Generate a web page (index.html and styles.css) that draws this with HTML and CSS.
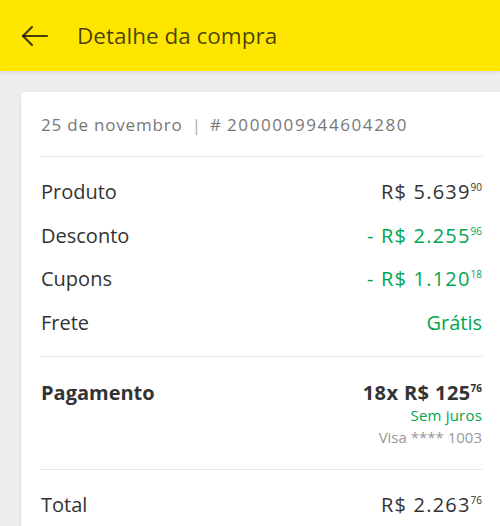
FILE: index.html
```html
<!DOCTYPE html>
<html lang="pt-BR">
<head>
    <meta charset="UTF-8">
    <meta name="viewport" content="width=device-width, initial-scale=1.0">
    <title>Detalhe da compra</title>
    <link rel="stylesheet" href="styles.css">
</head>
<body>

<header class="topbar">
    <svg class="back-icon" width="28" height="22" viewBox="0 0 28 22" fill="none" stroke="currentColor" stroke-width="2.2" stroke-linecap="round" stroke-linejoin="round">
        <path d="M26 11H2"/>
        <path d="M11 2L2 11l9 9"/>
    </svg>
    <h1>Detalhe da compra</h1>
</header>

<div class="container">
    <div class="card">
        <p class="meta">25 de novembro <span class="bar">|</span> # <span class="order-id">2000009944604280</span></p>

        <div class="section">
            <div class="row">
                <span>Produto</span>
                <span class="price">R$ 5.639<sup>90</sup></span>
            </div>
            <div class="row">
                <span>Desconto</span>
                <span class="price green">- R$ 2.255<sup>96</sup></span>
            </div>
            <div class="row">
                <span>Cupons</span>
                <span class="price green">- R$ 1.120<sup>18</sup></span>
            </div>
            <div class="row">
                <span>Frete</span>
                <span class="green">Grátis</span>
            </div>
        </div>

        <div class="section payment">
            <div class="row">
                <span class="strong">Pagamento</span>
                <div class="pay-info">
                    <span class="price strong">18x R$ 125<sup>76</sup></span>
                    <span class="small green">Sem juros</span>
                    <span class="small grey">Visa **** 1003</span>
                </div>
            </div>
        </div>

        <div class="section">
            <div class="row">
                <span>Total</span>
                <span class="price">R$ 2.263<sup>76</sup></span>
            </div>
        </div>
    </div>
</div>

</body>
</html>
```

FILE: styles.css
```css
/* General */
* {
    margin: 0;
    padding: 0;
    box-sizing: border-box;
}
body {
    font-family: "Open Sans", Lato, Arial, sans-serif;
    background-color: #eeeeee;
    color: #333;
    overflow: hidden;
}

/* Header */
.topbar {
    height: 71px;
    background-color: #ffe600;
    display: flex;
    align-items: center;
    padding-left: 21px;
    box-shadow: 0 1px 4px rgba(0, 0, 0, 0.12);
    color: rgba(0, 0, 0, 0.72);
    position: relative;
}
.back-icon {
    flex-shrink: 0;
    margin-right: 28px;
}
.topbar h1 {
    font-size: 22.5px;
    font-weight: 400;
}

/* Card */
.container {
    padding: 21px 0 0 21px;
}
.card {
    background: #fff;
    margin-right: -20px;
    border-radius: 4px;
    box-shadow: 0 1px 3px rgba(0, 0, 0, 0.12);
    padding: 0 38px 0 20px;
}
.meta {
    font-size: 17px;
    letter-spacing: 0.8px;
    color: #777;
    height: 65px;
    padding-top: 21px;
    border-bottom: 1px solid #e6e6e6;
    white-space: nowrap;
}
.meta .bar {
    color: #aaa;
    margin: 0 3px 0 4px;
}
.order-id {
    letter-spacing: 1.6px;
}
.section {
    padding: 23px 0 22px;
    border-bottom: 1px solid #e6e6e6;
}
.section:last-child {
    border-bottom: none;
    padding-bottom: 30px;
}
.row {
    display: flex;
    justify-content: space-between;
    align-items: flex-start;
    font-size: 20px;
    line-height: 23px;
    margin-bottom: 20.5px;
}
.section .row:last-child {
    margin-bottom: 0;
}
.price {
    letter-spacing: 1.2px;
}
.price.strong {
    letter-spacing: 0.4px;
}
.price sup {
    font-size: 10px;
    vertical-align: top;
    line-height: 14px;
    margin-left: 0;
    letter-spacing: 0;
}
.green {
    color: #00a650;
}
.strong {
    font-weight: 700;
}
.payment {
    padding: 24px 0 20px;
}
.pay-info {
    display: flex;
    flex-direction: column;
    align-items: flex-end;
}
.small {
    font-size: 15px;
    line-height: 22.5px;
    letter-spacing: 0.2px;
}
.grey {
    color: #999;
    letter-spacing: 0;
}
```
